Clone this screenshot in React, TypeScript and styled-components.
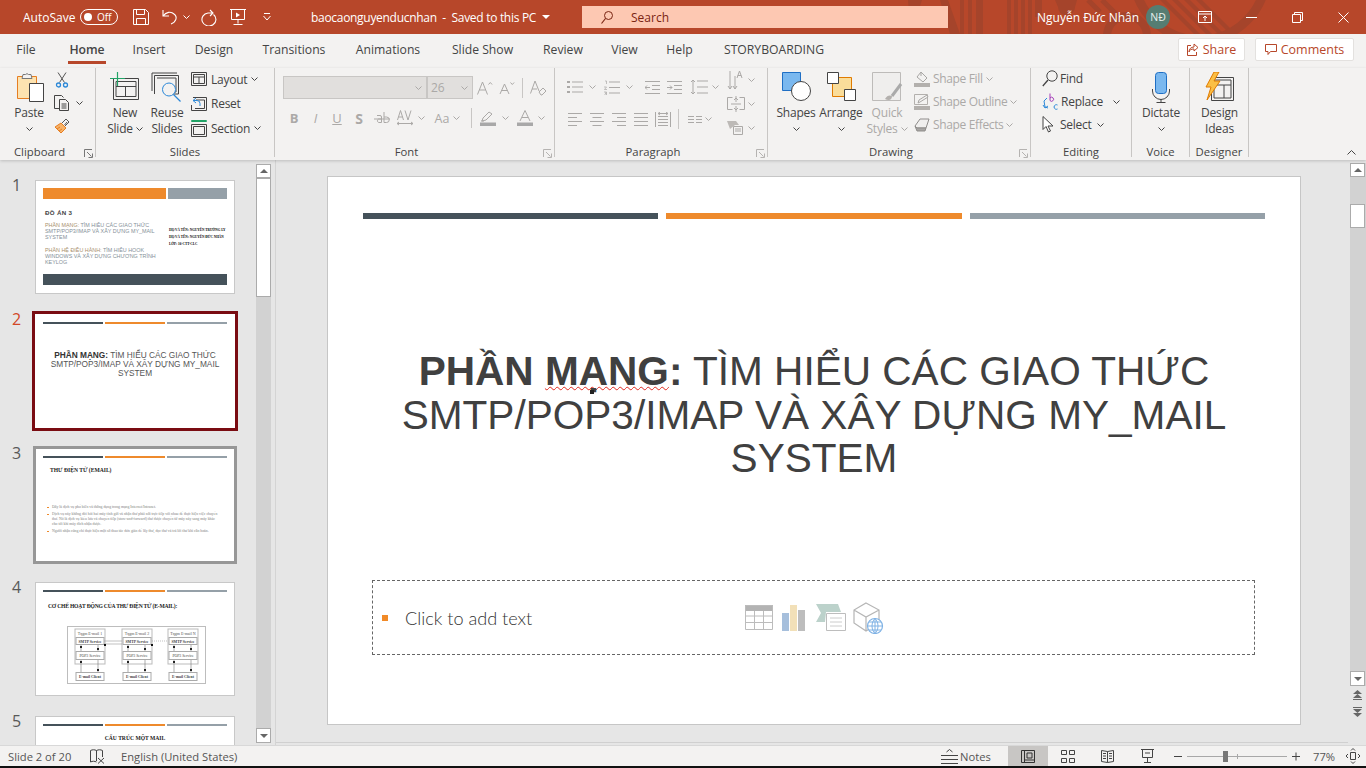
import React from "react";
import styled, { createGlobalStyle } from "styled-components";

const Global = createGlobalStyle`
  html, body { margin: 0; padding: 0; background: #000; }
  * { box-sizing: border-box; }
`;
const UI = `"Open Sans", "Noto Sans", sans-serif`;
const D = "#444";
const G = "#ABA9A7";

const Root = styled.div`
  width: 1366px; height: 768px; overflow: hidden; display: flex; flex-direction: column;
  font-family: ${UI}; font-size: 12px; color: ${D}; background: #e6e6e6;
`;
const Ico = styled.svg<{ $ml?: number }>`
  display: block; flex-shrink: 0; fill: none; margin-left: ${p => p.$ml ?? 0}px;
`;
const Chev = ({ c = D, ml = 0 }: { c?: string; ml?: number }) => (
  <Ico $ml={ml} width="7" height="4" viewBox="0 0 7 4"><path d="M.5.5l3 3 3-3" stroke={c} /></Ico>
);

/* ---------- title bar ---------- */
const TitleBar = styled.header`
  position: relative; height: 34px; background: #b7472a; color: #fff; display: flex; align-items: center;
  padding-left: 23px; flex-shrink: 0;
`;
const Pattern = styled.svg`
  position: absolute; left: 880px; top: 0; pointer-events: none;
`;
const AutoSave = styled.span` width: 57px; position: relative; `;
const Toggle = styled.span`
  position: relative; width: 38px; height: 16px; border: 1px solid #fff; border-radius: 8px; display: flex; align-items: center;
  padding-left: 3px; gap: 5px; font-size: 10px;
  &::before { content: ""; width: 8px; height: 8px; background: #fff; border-radius: 50%; }
`;
const Qat = styled.div<{ $ml: number }>` margin-left: ${p => p.$ml}px; position: relative; display: flex; align-items: center; `;
const DocTitle = styled.div`
  position: relative; margin-left: 40px; width: 271px; display: flex; align-items: center; white-space: pre; letter-spacing: -.3px;
`;
const SearchBox = styled.div`
  position: relative; width: 366px; height: 22px; background: #fdc8b2; color: #7a2412; display: flex; align-items: center;
  padding-left: 19px; gap: 18px;
`;
const UserName = styled.span` position: relative; margin-left: 89px; width: 98px; white-space: nowrap; `;
const Avatar = styled.span`
  position: relative; margin-left: 11px; width: 24px; height: 24px; border-radius: 50%; background: #567d72; color: #e8efed; font-size: 10.5px;
  display: flex; align-items: center; justify-content: center;
`;
const WinControls = styled.div` position: relative; margin-left: auto; display: flex; `;
const WinBtn = styled.span` width: 46px; height: 34px; display: flex; align-items: center; justify-content: center; `;

/* ---------- tabs ---------- */
const TabBar = styled.nav`
  height: 34px; background: #f3f2f1; display: flex; align-items: flex-start; flex-shrink: 0; padding-left: 17px;
`;
const Tab = styled.span<{ $w: number; $ml: number; $active?: boolean }>`
  position: relative; width: ${p => p.$w}px; margin-left: ${p => p.$ml}px; height: 30px; padding-top: 7px; display: flex; justify-content: center;
  white-space: nowrap; font-size: 12.2px; line-height: 18px; flex-shrink: 0;
  font-weight: ${p => (p.$active ? 600 : 400)};
  ${p => p.$active && `&::after { content: ""; position: absolute; left: 0; right: 0; top: 27px; height: 3px; background: #b7472a; }`}
`;
const ActionBtn = styled.span<{ $w: number; $ml: number }>`
  margin: 4px 0 0 ${p => p.$ml}px; width: ${p => p.$w}px; height: 23px; background: #fff; border: 1px solid #e3e1df; border-radius: 2px; color: #b7472a;
  display: flex; align-items: center; justify-content: center; gap: 4px; font-size: 12.5px; font-weight: 500; flex-shrink: 0;
`;

/* ---------- ribbon ---------- */
const Ribbon = styled.section`
  height: 92px; background: #f3f2f1; display: flex; flex-shrink: 0; position: relative; z-index: 1;
  box-shadow: 0 1px 3px rgba(0,0,0,.18);
`;
const Group = styled.div<{ $w: number }>`
  position: relative; width: ${p => p.$w}px; height: 89px; border-right: 1px solid #c8c6c4; display: flex; flex-direction: column;
`;
const GroupBody = styled.div<{ $pl?: number; $pt?: number }>`
  height: 77px; display: flex; padding-left: ${p => p.$pl ?? 0}px; padding-top: ${p => p.$pt ?? 0}px;
`;
const GroupLabel = styled.div<{ $pr?: number }>`
  height: 12px; line-height: 14px; text-align: center; font-size: 11.3px; white-space: nowrap; padding-right: ${p => p.$pr ?? 0}px;
`;
const LeftLabel = styled(GroupLabel)` text-align: left; padding-left: 14px; `;
const Launcher = styled(Ico)` position: absolute; right: 2px; bottom: -1px; `;
const BigBtn = styled.div<{ $w: number; $off?: boolean }>`
  width: ${p => p.$w}px; display: flex; flex-direction: column; align-items: center; flex-shrink: 0;
  color: ${p => (p.$off ? G : D)}; line-height: 16px; white-space: nowrap; letter-spacing: -.2px;
`;
const BigSlot = styled.div<{ $pl?: number }>` height: 37px; padding-top: 4px; padding-left: ${p => p.$pl ?? 0}px; `;
const LabelLine = styled.div` display: flex; align-items: center; gap: 3px; height: 16px; `;
const CenterChev = styled.div` height: 16px; display: flex; align-items: center; `;
const SmallCol = styled.div<{ $ml?: number; $mt?: number; $pt?: number; $gap?: number; $w?: number }>`
  margin-left: ${p => p.$ml ?? 0}px; margin-top: ${p => p.$mt ?? 0}px; padding-top: ${p => p.$pt ?? 0}px; display: flex; flex-direction: column; gap: ${p => p.$gap ?? 0}px;
  ${p => p.$w && `width: ${p.$w}px; flex-shrink: 0;`}
`;
const SmallRow = styled.div<{ $h?: number; $off?: boolean; $gap?: number }>`
  height: ${p => p.$h ?? 24}px; display: flex; align-items: center; gap: ${p => p.$gap ?? 3}px; white-space: nowrap; color: ${p => (p.$off ? G : D)};
  letter-spacing: ${p => (p.$off ? "-.35px" : "-.25px")};
`;
const IconRow = styled.div<{ $h?: number }>` display: flex; align-items: center; height: ${p => p.$h ?? 24}px; `;
const Slot = styled.span<{ $w: number; $ml?: number; $c?: string; $b?: boolean; $i?: boolean; $u?: boolean; $fs?: number }>`
  width: ${p => p.$w}px; margin-left: ${p => p.$ml ?? 0}px; display: flex; justify-content: center; align-items: center; flex-shrink: 0;
  color: ${p => p.$c ?? G}; font-size: ${p => p.$fs ?? 13}px; font-weight: ${p => (p.$b ? 700 : 400)};
  font-style: ${p => (p.$i ? "italic" : "normal")}; text-decoration: ${p => (p.$u ? "underline" : "none")};
`;
const Combo = styled.span<{ $w: number }>`
  width: ${p => p.$w}px; height: 23px; background: #e1dfdd; border: 1px solid #c8c6c4; display: flex; align-items: center; justify-content: space-between;
  padding: 0 4px 0 3px; color: ${G}; flex-shrink: 0;
`;
const VSep = styled.span<{ $ml: number; $mr: number; $h: number }>`
  width: 1px; height: ${p => p.$h}px; background: #c8c6c4; margin: 0 ${p => p.$mr}px 0 ${p => p.$ml}px; flex-shrink: 0;
`;
const Collapse = styled.div`
  position: absolute; right: 10px; bottom: 5px;
`;

/* ---------- main ---------- */
const Main = styled.main` flex: 1; display: flex; min-height: 0; `;
const ThumbPane = styled.aside` width: 276px; display: flex; border-right: 1px solid #d4d4d4; flex-shrink: 0; `;
const ThumbList = styled.div` width: 256px; height: 100%; overflow: hidden; padding-top: 20px; `;
const ThumbItem = styled.div` display: flex; height: 134px; `;
const Num = styled.div<{ $on?: boolean }>`
  width: 35px; padding-left: 12px; font-size: 16px; line-height: 16px; margin-top: -3px; color: ${p => (p.$on ? "#d24726" : "#595959")};
`;
const Thumb = styled.div<{ $mode?: "sel" | "hl" }>`
  position: relative; width: 200px; height: 114px; background: #fff; border: 1px solid #c8c8c8; padding: 7px; flex-shrink: 0;
  ${p => p.$mode === "sel" && `outline: 3px solid #7a0c12; border-color: #fff;`}
  ${p => p.$mode === "hl" && `outline: 3px solid #979797; outline-offset: -1px; border-color: #979797;`}
`;
const TBars = styled.div` display: flex; gap: 2px; `;
const TBar = styled.div<{ $c: string; $w: number; $h: number }>` width: ${p => p.$w}px; height: ${p => p.$h}px; background: ${p => p.$c}; `;
const T1Body = styled.div` display: flex; height: 75px; padding: 10px 0 0 2px; `;
const T1Left = styled.div` width: 124px; flex-shrink: 0; color: #858f98; font: 5.4px/6.2px "Liberation Sans", sans-serif; padding-right: 8px; `;
const T1Head = styled.div` color: #444; font: bold 6.2px/7px "Liberation Sans", sans-serif; margin-bottom: 6px; letter-spacing: .3px; `;
const T1Para = styled.p` margin: 0 0 6px; `;
const T1Or = styled.span` color: #a98f6d; `;
const T1Right = styled.div` margin: 18px 0 0 0; color: #000; font: bold 3.4px/7px "Liberation Serif", serif; white-space: nowrap; `;
const T2Title = styled.div`
  margin-top: 27px; text-align: center; color: #555; font: 8.3px/9.1px "Liberation Sans", sans-serif;
  b { color: #333; }
`;
const SerifTitle = styled.div<{ $ml?: number; $mt: number; $center?: boolean; $ls?: number }>`
  margin: ${p => p.$mt}px 0 0 ${p => p.$ml ?? 0}px; text-align: ${p => (p.$center ? "center" : "left")};
  font: bold 5.6px/7px "Liberation Serif", serif; color: #222; white-space: nowrap; letter-spacing: ${p => p.$ls ?? 0}px;
`;
const T3List = styled.ul`
  margin: 31px 0 0; padding: 0 0 0 4px; list-style: none; font: 3.8px/5px "Liberation Serif", serif; color: #7d7d7d; width: 178px;
  li { position: relative; padding-left: 5px; margin-bottom: 2px; }
  li::before { content: ""; position: absolute; left: 0; top: 1.500px; width: 1.500px; height: 1.500px; background: #ee8a2c; }
`;
const DiagramWrap = styled.div` margin: 16px 0 0 24px; `;

const ScrollV = styled.div` width: 15px; margin: 4px 0 2px; background: #d2d2d2; display: flex; flex-direction: column; position: relative; flex-shrink: 0; `;
const ScrollBtn = styled.div<{ $h?: number }>`
  width: 15px; height: ${p => p.$h ?? 14}px; background: #fff; border: 1px solid #ababab; display: flex; align-items: center; justify-content: center; flex-shrink: 0;
`;
const ScrollThumb = styled.div<{ $h: number; $mt: number }>`
  width: 15px; height: ${p => p.$h}px; margin-top: ${p => p.$mt}px; background: #fff; border: 1px solid #ababab; flex-shrink: 0;
`;
const Arrow = styled.span<{ $up?: boolean }>`
  width: 0; height: 0; border-left: 4px solid transparent; border-right: 4px solid transparent;
  ${p => (p.$up ? "border-bottom: 4px solid #666;" : "border-top: 4px solid #666;")}
`;
const Spacer = styled.div` flex: 1; `;

const Editor = styled.div` flex: 1; padding: 16px 0 0 51px; border-bottom: 1px solid #d0d0d0; margin-bottom: 2px; `;
const Slide = styled.article`
  width: 974px; height: 549px; background: #fff; border: 1px solid #c6c6c6; padding: 36px 35px; display: flex; flex-direction: column;
`;
const SlideBars = styled.div` display: flex; gap: 8px; `;
const SlideBar = styled.div<{ $c: string }>` flex: 1; height: 6px; background: ${p => p.$c}; `;
const Heading = styled.h1`
  margin: 131px -10px 0; text-align: center; color: #404040; font: 400 40.6px/43.6px "Liberation Sans", Arial, sans-serif; height: 131px;
`;
const Wavy = styled.span`
  position: relative;
  text-decoration: underline wavy #e0281e; text-decoration-thickness: 1px; text-underline-offset: 1px; text-decoration-skip-ink: none;
`;
const Handle = styled.span` position: absolute; left: 45px; bottom: 0; width: 4px; height: 4px; background: #222; `;
const Placeholder = styled.div`
  margin: 99px 0 0 9px; width: 883px; height: 75px; border: 1px dashed #666; display: flex; align-items: center; padding-left: 9px; flex-shrink: 0;
`;
const PBullet = styled.span` width: 6px; height: 6px; background: #f18a28; flex-shrink: 0; `;
const PText = styled.span` margin-left: 17px; width: 340px; font: 300 18.1px "Lato", sans-serif; color: #333; `;
const InsertIcons = styled.div` display: flex; align-items: center; gap: 9px; `;

const RightBar = styled.div` width: 18px; padding-left: 2px; display: flex; flex-direction: column; flex-shrink: 0; `;
const RightTrack = styled.div` height: 523px; margin-top: 3px; background: #d2d2d2; display: flex; flex-direction: column; `;
const JumpBtns = styled.div` display: flex; flex-direction: column; align-items: center; width: 15px; gap: 7px; padding-top: 4px; `;

/* ---------- status ---------- */
const Status = styled.footer`
  height: 21px; background: #f3f2f1; border-top: 1px solid #d8d8d8; display: flex; align-items: center; flex-shrink: 0; font-size: 11.2px; color: #555; padding-left: 8px;
`;
const BlackEdge = styled.div` height: 2px; background: #111; flex-shrink: 0; `;
const StatusText = styled.span<{ $ml?: number; $w?: number }>` margin-left: ${p => p.$ml ?? 0}px; width: ${p => (p.$w ? `${p.$w}px` : "auto")}; white-space: nowrap; `;
const ViewBtn = styled.span<{ $on?: boolean; $w: number }>`
  width: ${p => p.$w}px; height: 21px; background: ${p => (p.$on ? "#c8c6c4" : "transparent")}; display: flex; align-items: center; justify-content: center;
`;
const ZoomTrack = styled.span`
  position: relative; width: 100px; height: 1px; background: #a8a8a8; margin: 0 5px;
`;
const ZoomThumb = styled.span` position: absolute; left: 36px; top: -5px; width: 5px; height: 11px; background: #777; `;
const ZoomTick = styled.span` position: absolute; left: 50px; top: -2px; width: 1px; height: 5px; background: #a8a8a8; `;

/* ---------- icons ---------- */
const PasteIcon = () => (
  <Ico width="28" height="31" viewBox="0 0 28 31">
    <path d="M.5 4.500h19v22H.5z" fill="#fde3b0" stroke="#e67e22" />
    <path d="M6 2.500h2.500a2 2 0 0 1 3 0H14l1 4H5z" fill="#f3f2f1" stroke="#777" />
    <path d="M12.500 11.500h14v18h-14z" fill="#fff" stroke="#444" />
  </Ico>
);
const CutIcon = () => (
  <Ico width="14" height="16" viewBox="0 0 14 16">
    <path d="M3 .5l6.5 10M11 .5L4.5 10.500" stroke="#555" />
    <circle cx="3.500" cy="13" r="2" stroke="#2b88d8" strokeWidth="1.3" /><circle cx="10.500" cy="13" r="2" stroke="#2b88d8" strokeWidth="1.3" />
  </Ico>
);
const CopyIcon = () => (
  <Ico width="16" height="16" viewBox="0 0 16 16">
    <path d="M5.500 13.500h-5v-13h7l2 2M5.500 4.500h6l3 3v8h-9zM7.500 9h5M7.500 11h5M7.500 13h5" stroke="#444" />
  </Ico>
);
const PainterIcon = () => (
  <Ico width="17" height="16" viewBox="0 0 17 16">
    <path d="M1 9l6 6 5-5-5-5z" fill="#f7b267" stroke="#e67e22" />
    <path d="M8 5l3-3 1-1 3 3-1 1-3 3M10.500 7l2.500-3" stroke="#555" />
    <path d="M3 11l3-2M5 13l3-2" stroke="#e67e22" />
  </Ico>
);
const NewSlideIcon = () => (
  <Ico width="30" height="30" viewBox="0 0 30 30">
    <path d="M3.500 6.500h25v21h-25zM6 9.500h20v15H6zM6 14.500h20M15.500 14.500v10" stroke="#444" />
    <path d="M0 6.500h15M7.500 0v14" stroke="#21a366" strokeWidth="1.2" />
  </Ico>
);
const ReuseIcon = () => (
  <Ico width="32" height="30" viewBox="0 0 32 30">
    <path d="M1 19V1h25M3.500 22V3.500h24V22H18M6 6h19v14H18" stroke="#444" />
    <circle cx="18" cy="17.500" r="6.500" stroke="#2b88d8" fill="#f3f2f1" /><path d="M22.500 22.500l7 7" stroke="#2b88d8" strokeWidth="1.2" />
  </Ico>
);
const LayoutIcon = () => (
  <Ico width="16" height="14" viewBox="0 0 16 14"><path d="M.5.5h15v13H.5zM2.500 2.500h11v9h-11zM2.500 5h11M8 5v6.500" stroke="#444" /></Ico>
);
const ResetIcon = () => (
  <Ico width="16" height="14" viewBox="0 0 16 14">
    <path d="M2 .5h13.500v13H.5V8M3 3h10.500v8.500H4" stroke="#444" /><path d="M5 1L2 3.500 5 6M2 3.500h4a3 3 0 0 1 3 3V9" stroke="#2b88d8" fill="#f3f2f1" />
  </Ico>
);
const SectionIcon = () => (
  <Ico width="16" height="17" viewBox="0 0 16 17">
    <path d="M.5 .5h15v1H.5z" stroke="#21a366" /><path d="M.5 4.500h15v12H.5zM2.500 6.500h11v8h-11z" stroke="#444" />
  </Ico>
);
const GrowA = ({ small }: { small?: boolean }) => (
  <Ico width="16" height="14" viewBox="0 0 16 14">
    {small ? <path d="M1 13L5.500 3 10 13M2.600 9.500h5.800M11.500 1.500l1.800 2 1.800-2" stroke={G} /> : <path d="M.5 13.500L5.500 1l5 12.500M2.300 9h6.400M11.500 3.500l1.800-2 1.800 2" stroke={G} />}
  </Ico>
);
const ClearIcon = () => (
  <Ico width="17" height="16" viewBox="0 0 17 16">
    <path d="M.5 13.500L5 1l4 10M2 9h5" stroke={G} /><path d="M9 12l4-4 3 3-4 4h-1z" stroke={G} />
  </Ico>
);
const StrikeIcon = () => (
  <Ico width="16" height="12" viewBox="0 0 16 12">
    <path d="M0 7h16M3 3.500h3a1.500 1.500 0 0 1 1.500 1.500v5.500H4.500a2 2 0 0 1 0-3.500h3M10 0v10.500M10 5h2.500a2.500 2.500 0 0 1 0 5.500H10" stroke={G} />
  </Ico>
);
const AVIcon = () => (
  <Ico width="16" height="16" viewBox="0 0 16 16">
    <path d="M.5 10L3.500.5 6.500 10M1.500 7h4M8 .5l3 9.500 3-9.500M0 13.500h16M2 12l-2 1.500 2 1.500M14 12l2 1.500-2 1.500" stroke={G} />
  </Ico>
);
const HighlightIcon = () => (
  <Ico width="16" height="16" viewBox="0 0 16 16">
    <path d="M2 11l1-3 6-6 3 2-6 6z M1 11h3" stroke={G} /><path d="M0 12.500h16V16H0z" fill="#a8a8a8" />
  </Ico>
);
const FontColorIcon = () => (
  <Ico width="16" height="16" viewBox="0 0 16 16">
    <path d="M3 11L8 .5 13 11M5 7.500h6" stroke={G} /><path d="M0 12.500h16V16H0z" fill="#a8a8a8" />
  </Ico>
);
const Lines = ({ w = 15, n = 4, mode = "l" }: { w?: number; n?: number; mode?: "l" | "c" | "r" | "j" }) => (
  <Ico width={w} height="13" viewBox={`0 0 ${w} 13`}>
    {Array.from({ length: n }).map((_, i) => {
      const y = 0.5 + (i * 12) / (n - 1);
      const short = mode !== "j" && i % 2 === 1;
      const len = short ? w - 5 : w;
      const x = mode === "l" || mode === "j" ? 0 : mode === "c" ? (w - len) / 2 : w - len;
      return <path key={i} d={`M${x} ${y}h${len}`} stroke={G} />;
    })}
  </Ico>
);
const BulletsIcon = () => (
  <Ico width="16" height="14" viewBox="0 0 16 14">
    <path d="M0 1h3v2H0zM0 6h3v2H0zM0 11h3v2H0z" fill={G} /><path d="M5 2h11M5 7h11M5 12h11" stroke={G} />
  </Ico>
);
const NumbersIcon = () => (
  <Ico width="16" height="15" viewBox="0 0 16 15">
    <path d="M1 1h1.500v3M0 7h2.500L.5 9.500h2.500M0 12h2.500v1.200H1h1.500V15H0" stroke={G} strokeWidth=".7" /><path d="M5 2h11M5 7.500h11M5 13h11" stroke={G} />
  </Ico>
);
const IndentIcon = ({ flip }: { flip?: boolean }) => (
  <Ico width="15" height="13" viewBox="0 0 15 13">
    <path d="M0 .5h15M7 4.500h8M7 8.500h8M0 12.500h15" stroke={G} />
    <path d={flip ? "M0 6.500h5M3 4.500l2 2-2 2" : "M0 6.500h5M2 4.500l-2 2 2 2"} stroke={G} />
  </Ico>
);
const SpacingIcon = () => (
  <Ico width="18" height="16" viewBox="0 0 18 16">
    <path d="M3 1v14M1 3l2-2 2 2M1 13l2 2 2-2M7 2h11M7 8h11M7 14h11" stroke={G} />
  </Ico>
);
const TextDirIcon = () => (
  <Ico width="16" height="20" viewBox="0 0 16 20">
    <path d="M3 1v18M1 16l2 3 2-3M8 6v13M6 16l2 3 2-3M10 8l2.500-7L15 8M10.800 5.500h3.400" stroke={G} />
  </Ico>
);
const AlignTextIcon = () => (
  <Ico width="18" height="16" viewBox="0 0 18 16">
    <path d="M.5 1.500h5M12.500 1.500h5v12h-5M5.500 13.500h-5v-12M9 0v6M7 4l2-2 2 2M9 10v6M7 12l2 2 2-2M4 8h10" stroke={G} />
  </Ico>
);
const SmartIcon = () => (
  <Ico width="16" height="14" viewBox="0 0 16 14">
    <path d="M0 0h9l3 4H8L3 8z" fill="#bdbab7" /><path d="M6.500 5.500h9v8h-9zM8 8h6M8 10h6" stroke={G} fill="#f3f2f1" />
  </Ico>
);
const DistIcon = () => (
  <Ico width="16" height="15" viewBox="0 0 16 15">
    <path d="M.5 0v15M15.500 0v15M3 4.500h10M3 7.500h10M3 10.500h10M3 13.500h10M3 1.500h10M5 0L3 1.500 5 3M11 0l2 1.500L11 3" stroke={G} />
  </Ico>
);
const ColsIcon = () => (
  <Ico width="14" height="7" viewBox="0 0 14 7"><path d="M0 .5h6M8 .5h6M0 3.500h6M8 3.500h6M0 6.500h6M8 6.500h6" stroke={G} /></Ico>
);
const ShapesIcon = () => (
  <Ico width="29" height="29" viewBox="0 0 29 29">
    <path d="M.5.5h18v18H.5z" fill="#7ab8ef" stroke="#1f6fc4" />
    <circle cx="19" cy="19" r="9.500" fill="#fff" stroke="#444" />
  </Ico>
);
const ArrangeIcon = () => (
  <Ico width="29" height="29" viewBox="0 0 29 29">
    <path d="M5.500 5.500h19v19h-19z" fill="#fadd9a" stroke="#e07b00" />
    <path d="M.5.5h11v11H.5zM17.500 17.500h11v11h-11z" fill="#fff" stroke="#444" />
  </Ico>
);
const QuickIcon = () => (
  <Ico width="31" height="33" viewBox="0 0 31 33">
    <path d="M.5.5h28v28H.5z" fill="#efeeed" stroke="#bdbbb9" />
    <path d="M29 12L20 24" stroke="#aaa" strokeWidth="3" /><path d="M13 27c2-4 5-4 7-3 0 4-3 5-7 3z" fill="#b3b0ad" />
  </Ico>
);
const FillIcon = () => (
  <Ico width="16" height="16" viewBox="0 0 16 16">
    <path d="M7 1l6 6-4 4-6-5zM7 1V5" stroke="#a8a6a4" /><path d="M0 12h16v4H0z" fill="#b3b0ad" />
  </Ico>
);
const OutlineIcon = () => (
  <Ico width="16" height="16" viewBox="0 0 16 16">
    <path d="M.5.5h13v10H.5z" stroke="#b3b0ad" /><path d="M4 9l1-3 8-5 1 2-8 5z" fill="#f3f2f1" stroke="#a8a6a4" /><path d="M0 12h16v4H0z" fill="#b3b0ad" />
  </Ico>
);
const EffectsIcon = () => (
  <Ico width="16" height="14" viewBox="0 0 16 14">
    <path d="M1 8l5-7h9l-3 9H3z" fill="#f0efee" stroke="#8f8d8b" /><path d="M1 8l2 5h8l1-3H3z" fill="#a8a6a4" stroke="#8f8d8b" />
  </Ico>
);
const FindIcon = () => (
  <Ico width="16" height="17" viewBox="0 0 16 17">
    <circle cx="10" cy="6" r="5.200" stroke="#444" /><path d="M6 10L.8 16" stroke="#444" strokeWidth="1.3" />
  </Ico>
);
const ReplaceIcon = () => (
  <Ico width="17" height="18" viewBox="0 0 17 18">
    <path d="M8 .5v7M8 5a2 2 0 1 1 0 2.500" stroke="#a33bb8" />
    <path d="M5 5L2 8l1 6 3 1M1 12l2 3 3-2" stroke="#2b88d8" />
    <path d="M15.500 12a2.300 2.300 0 1 0 0 4" stroke="#2b88d8" />
  </Ico>
);
const SelectIcon = () => (
  <Ico width="13" height="17" viewBox="0 0 13 17">
    <path d="M1 .5v13l3-3 2.500 5.500 2-1-2.500-5h5z" stroke="#444" fill="#fff" />
  </Ico>
);
const MicIcon = () => (
  <Ico width="20" height="31" viewBox="0 0 20 31">
    <rect x="4.500" y=".5" width="11" height="21" rx="3" fill="#7ab8ef" stroke="#1f6fc4" />
    <path d="M1.500 17v2a8 8 0 0 0 17 0v-2M10 27v3M5.500 30.500h9" stroke="#444" />
  </Ico>
);
const IdeasIcon = () => (
  <Ico width="30" height="30" viewBox="0 0 30 30">
    <path d="M6.500 5.500h22v23h-22zM9 8h17v18H9zM9 13h17M19 13v13" stroke="#444" />
    <path d="M9 0L1 15h5L2 28 15 9H9l5-9z" fill="#fbbf45" stroke="#e07b00" />
  </Ico>
);
const LaunchIcon = ({ c = "#777" }: { c?: string }) => (
  <Launcher width="9" height="9" viewBox="0 0 9 9"><path d="M.5 8V.5H8M3 3l4.500 4.500M4.500 8.500h4v-4" stroke={c} /></Launcher>
);

const DiagramCol = ({ x, head }: { x: number; head: string }) => (
  <g>
    <rect x={x} y="3" width="30" height="35" stroke="#bbb" />
    <text x={x + 15} y="9" textAnchor="middle" fontFamily="Liberation Serif" fontSize="4" fill="#555">{head}</text>
    <rect x={x + 1} y="11.500" width="28" height="7" stroke="#aaa" />
    <text x={x + 15} y="16.500" textAnchor="middle" fontFamily="Liberation Serif" fontWeight="700" fontSize="3.800" fill="#444">SMTP Service</text>
    <rect x={x + 1} y="25.500" width="28" height="8" stroke="#aaa" />
    <text x={x + 15} y="31" textAnchor="middle" fontFamily="Liberation Serif" fontSize="3.800" fill="#444">POP3 Service</text>
    <rect x={x + 1} y="46.500" width="28" height="8" stroke="#aaa" />
    <text x={x + 15} y="52" textAnchor="middle" fontFamily="Liberation Serif" fontWeight="700" fontSize="3.800" fill="#444">E-mail Client</text>
    <path d={`M${x + 6} 19v6M${x + 23} 19v6M${x + 6} 34v12M${x + 23} 34v12`} stroke="#777" strokeWidth=".6" />
    <path d={`M${x + 5} 20h2v2h-2zM${x + 22} 22h2v2h-2zM${x + 5} 35h2v2h-2zM${x + 22} 43h2v2h-2z`} fill="#222" />
  </g>
);
const Diagram = () => (
  <Ico width="139" height="59" viewBox="0 0 139 59">
    <rect x=".5" y=".5" width="138" height="57" stroke="#bdbdbd" fill="#fff" />
    <DiagramCol x={8} head="Tqgm E-mail 1" />
    <DiagramCol x={55} head="Tqgm E-mail 2" />
    <DiagramCol x={101} head="Tqgm E-mail N" />
    <path d="M37 15h18M37 18h18" stroke="#999" strokeWidth=".6" />
    <path d="M85 15h16" stroke="#999" strokeWidth=".6" strokeDasharray="1 1" />
    <path d="M37 18h2v2h-2zM84 18h2v2h-2z" fill="#111" />
  </Ico>
);

const PatternArt = () => (
  <Pattern width="486" height="34" viewBox="0 0 486 34">
    <g fill="#a5442b">
      <path d="M28 0h14l-8 24h-4zM60 0h8l12 34H70zM80 0h4v34h-4zM88 0h4v34h-4zM96 0h7v34h-7zM127 0h4v34h-4zM134 0h4v34h-4zM141 0h4v34h-4zM148 0h4v34h-4zM155 0h7v17h-7z" />
      <path d="M175 0h22l-2 7a8 8 0 0 1-17 0z" />
      <path d="M280 0h6l34 34h-6zM292 0h6l34 34h-6zM304 0h6l34 34h-6zM316 0h6l30 30v4h-2z" />
    </g>
    <g fill="none" stroke="#a5442b">
      <circle cx="247" cy="36" r="20" strokeWidth="8" />
      <circle cx="320" cy="-26" r="66" strokeWidth="9" />
      <path d="M222 0l14 14M208 0l12 12" strokeWidth="5" />
    </g>
  </Pattern>
);

const tabs: [string, number, number, boolean?][] = [
  ["File", 18, 0], ["Home", 38, 33, true], ["Insert", 32, 27], ["Design", 40, 29], ["Transitions", 62, 29], ["Animations", 64, 31],
  ["Slide Show", 63, 31], ["Review", 40, 29], ["View", 27, 28], ["Help", 27, 28], ["STORYBOARDING", 102, 30],
];

const App = () => (
  <Root>
    <Global />
    <TitleBar>
      <PatternArt />
      <AutoSave>AutoSave</AutoSave>
      <Toggle>Off</Toggle>
      <Qat $ml={15}>
        <Ico width="16" height="16" viewBox="0 0 16 16"><path d="M.5.5h12l3 3v12H.5zM3.500.5v5h8v-5M3.500 15.500v-6h9v6" stroke="#fff" /></Ico>
        <Ico $ml={13} width="16" height="16" viewBox="0 0 16 16"><path d="M1 1v6h6M1 7c3-4 8-5 11-2 4 3 2 8-3 10" stroke="#fff" strokeWidth="1.1" /></Ico>
        <Ico $ml={5} width="7" height="4" viewBox="0 0 7 4"><path d="M.5.5l3 3 3-3" stroke="#fff" /></Ico>
        <Ico $ml={10} width="17" height="17" viewBox="0 0 17 17"><path d="M10 1l3 3-3 3M12 4H8a7 6.500 0 1 0 5.500 1.500" stroke="#fff" strokeWidth="1.1" /></Ico>
        <Ico $ml={13} width="16" height="16" viewBox="0 0 16 16"><path d="M0 .5h16M1.500.5v10h13V.5M8 10.500v4M3.500 15.500h9" stroke="#fff" /><path d="M6 3.500l4 2.500-4 2.500z" fill="#fff" /></Ico>
        <Ico $ml={17} width="8" height="8" viewBox="0 0 8 8"><path d="M1 .5h6M.5 3l3.500 4 3.500-4" stroke="#fff" /></Ico>
      </Qat>
      <DocTitle>
        baocaonguyenducnhan  -  Saved to this PC
        <Ico $ml={6} width="8" height="4" viewBox="0 0 8 4"><path d="M0 0h8L4 4z" fill="#fff" /></Ico>
      </DocTitle>
      <SearchBox>
        <Ico width="12" height="13" viewBox="0 0 12 13"><circle cx="7.500" cy="4.500" r="4" stroke="#7a2412" /><path d="M4.500 7.500L.5 12.500" stroke="#7a2412" strokeWidth="1.2" /></Ico>
        Search
      </SearchBox>
      <UserName>Nguyễn Đức Nhân</UserName>
      <Avatar>NĐ</Avatar>
      <WinControls>
        <WinBtn><Ico width="14" height="12" viewBox="0 0 14 12"><path d="M.5.5h13v11H.5zM.5 3h13M7 10V5M5 7l2-2 2 2" stroke="#fff" /></Ico></WinBtn>
        <WinBtn><Ico width="11" height="1" viewBox="0 0 11 1"><path d="M0 .5h11" stroke="#fff" /></Ico></WinBtn>
        <WinBtn><Ico width="11" height="11" viewBox="0 0 11 11"><path d="M.5 2.500h8v8h-8zM2.500 2.500v-2h8v8h-2" stroke="#fff" /></Ico></WinBtn>
        <WinBtn><Ico width="11" height="11" viewBox="0 0 11 11"><path d="M.5.5l10 10M10.500.5l-10 10" stroke="#fff" /></Ico></WinBtn>
      </WinControls>
    </TitleBar>

    <TabBar>
      {tabs.map(([t, w, ml, a]) => <Tab key={t} $w={w} $ml={ml} $active={a}>{t}</Tab>)}
      <ActionBtn $w={67} $ml={353}>
        <Ico width="12" height="13" viewBox="0 0 12 13"><path d="M7 1l4 3.500L7 8V6C4 6 2.500 7 2 9c0-3 2-5 5-5zM4 2.500H.5v10h9V9" stroke="#b7472a" /></Ico>
        Share
      </ActionBtn>
      <ActionBtn $w={99} $ml={10}>
        <Ico width="12" height="12" viewBox="0 0 12 12"><path d="M.5.5h11v7H5.500L3 10.500v-3H.5z" stroke="#b7472a" /></Ico>
        Comments
      </ActionBtn>
    </TabBar>

    <Ribbon>
      <Group $w={96}>
        <GroupBody $pl={6}>
          <BigBtn $w={46}>
            <BigSlot $pl={3}><PasteIcon /></BigSlot>
            <LabelLine>Paste</LabelLine>
            <CenterChev><Chev /></CenterChev>
          </BigBtn>
          <SmallCol $ml={2} $pt={4} $gap={7}>
            <IconRow $h={16}><Slot $w={14} $ml={1}><CutIcon /></Slot></IconRow>
            <IconRow $h={16}><CopyIcon /><Chev ml={6} /></IconRow>
            <IconRow $h={16}><PainterIcon /></IconRow>
          </SmallCol>
        </GroupBody>
        <LeftLabel>Clipboard</LeftLabel>
        <LaunchIcon />
      </Group>

      <Group $w={179}>
        <GroupBody $pl={5}>
          <BigBtn $w={48}>
            <BigSlot><NewSlideIcon /></BigSlot>
            <LabelLine>New</LabelLine>
            <LabelLine>Slide <Chev /></LabelLine>
          </BigBtn>
          <BigBtn $w={36}>
            <BigSlot><ReuseIcon /></BigSlot>
            <LabelLine>Reuse</LabelLine>
            <LabelLine>Slides</LabelLine>
          </BigBtn>
          <SmallCol $ml={6} $mt={-1}>
            <SmallRow $h={24.5} $gap={4}><LayoutIcon />Layout <Chev /></SmallRow>
            <SmallRow $h={24.5} $gap={4}><ResetIcon />Reset</SmallRow>
            <SmallRow $h={24.5} $gap={4}><SectionIcon />Section <Chev /></SmallRow>
          </SmallCol>
        </GroupBody>
        <GroupLabel>Slides</GroupLabel>
      </Group>

      <Group $w={280}>
        <GroupBody $pl={8} $pt={8}>
          <SmallCol $gap={7}>
            <IconRow $h={23}>
              <Combo $w={144}><span /><Chev c={G} /></Combo>
              <Combo $w={46}>26<Chev c={G} /></Combo>
              <Slot $w={16} $ml={4}><GrowA /></Slot>
              <Slot $w={16} $ml={6}><GrowA small /></Slot>
              <VSep $ml={7} $mr={7} $h={20} />
              <ClearIcon />
            </IconRow>
            <IconRow $h={24}>
              <Slot $w={22} $b>B</Slot>
              <Slot $w={21} $i>I</Slot>
              <Slot $w={22} $u>U</Slot>
              <Slot $w={22} $b $fs={14}>S</Slot>
              <Slot $w={24}><StrikeIcon /></Slot>
              <Slot $w={22}><AVIcon /></Slot>
              <Chev c={G} ml={2} />
              <Slot $w={20} $ml={7} $fs={12.500}>Aa</Slot>
              <Chev c={G} ml={1} />
              <VSep $ml={11} $mr={7} $h={20} />
              <Slot $w={18}><HighlightIcon /></Slot>
              <Chev c={G} ml={5} />
              <Slot $w={18} $ml={7}><FontColorIcon /></Slot>
              <Chev c={G} ml={4} />
            </IconRow>
          </SmallCol>
        </GroupBody>
        <GroupLabel $pr={16}>Font</GroupLabel>
        <LaunchIcon c="#b5b3b1" />
      </Group>

      <Group $w={213}>
        <GroupBody $pl={12}>
          <SmallCol $gap={8} $pt={7} $w={160}>
            <IconRow $h={24}>
              <BulletsIcon /><Chev c={G} ml={6} />
              <Slot $w={16} $ml={8}><NumbersIcon /></Slot><Chev c={G} ml={6} />
              <Slot $w={15} $ml={12}><IndentIcon /></Slot>
              <Slot $w={15} $ml={7}><IndentIcon flip /></Slot>
              <Slot $w={18} $ml={8}><SpacingIcon /></Slot><Chev c={G} ml={4} />
            </IconRow>
            <IconRow $h={24}>
              <Slot $w={14} $ml={1}><Lines w={14} mode="l" /></Slot>
              <Slot $w={14} $ml={8}><Lines w={14} mode="c" /></Slot>
              <Slot $w={14} $ml={8}><Lines w={14} mode="r" /></Slot>
              <Slot $w={14} $ml={8}><Lines w={14} mode="j" /></Slot>
              <Slot $w={16} $ml={7}><DistIcon /></Slot>
              <VSep $ml={7} $mr={9} $h={20} />
              <ColsIcon /><Chev c={G} ml={3} />
            </IconRow>
          </SmallCol>
          <SmallCol>
            <IconRow $h={24}><TextDirIcon /><Chev c={G} ml={5} /></IconRow>
            <IconRow $h={24}><AlignTextIcon /><Chev c={G} ml={3} /></IconRow>
            <IconRow $h={24}><SmartIcon /><Chev c={G} ml={5} /></IconRow>
          </SmallCol>
        </GroupBody>
        <GroupLabel $pr={16}>Paragraph</GroupLabel>
        <LaunchIcon c="#b5b3b1" />
      </Group>

      <Group $w={263}>
        <GroupBody $pl={5}>
          <BigBtn $w={46}>
            <BigSlot><ShapesIcon /></BigSlot>
            <LabelLine>Shapes</LabelLine>
            <CenterChev><Chev /></CenterChev>
          </BigBtn>
          <BigBtn $w={44}>
            <BigSlot><ArrangeIcon /></BigSlot>
            <LabelLine>Arrange</LabelLine>
            <CenterChev><Chev /></CenterChev>
          </BigBtn>
          <BigBtn $w={48} $off>
            <BigSlot><QuickIcon /></BigSlot>
            <LabelLine>Quick</LabelLine>
            <LabelLine>Styles <Chev c={G} /></LabelLine>
          </BigBtn>
          <SmallCol $ml={3} $mt={-1}>
            <SmallRow $h={23} $off><FillIcon />Shape Fill <Chev c={G} /></SmallRow>
            <SmallRow $h={23} $off><OutlineIcon />Shape Outline <Chev c={G} /></SmallRow>
            <SmallRow $h={23} $off><EffectsIcon />Shape Effects <Chev c={G} /></SmallRow>
          </SmallCol>
        </GroupBody>
        <GroupLabel $pr={16}>Drawing</GroupLabel>
        <LaunchIcon c="#b5b3b1" />
      </Group>

      <Group $w={101}>
        <GroupBody $pl={11}>
          <SmallCol $mt={-1}>
            <SmallRow $h={23} $gap={2}><FindIcon />Find</SmallRow>
            <SmallRow $h={23} $gap={2}><ReplaceIcon />Replace<Chev ml={8} /></SmallRow>
            <SmallRow $h={23} $gap={5}><SelectIcon />Select <Chev /></SmallRow>
          </SmallCol>
        </GroupBody>
        <GroupLabel>Editing</GroupLabel>
      </Group>

      <Group $w={58}>
        <GroupBody>
          <BigBtn $w={58}>
            <BigSlot><MicIcon /></BigSlot>
            <LabelLine>Dictate</LabelLine>
            <CenterChev><Chev /></CenterChev>
          </BigBtn>
        </GroupBody>
        <GroupLabel>Voice</GroupLabel>
      </Group>

      <Group $w={59}>
        <GroupBody>
          <BigBtn $w={59}>
            <BigSlot><IdeasIcon /></BigSlot>
            <LabelLine>Design</LabelLine>
            <LabelLine>Ideas</LabelLine>
          </BigBtn>
        </GroupBody>
        <GroupLabel>Designer</GroupLabel>
      </Group>

      <Collapse><Ico width="9" height="5" viewBox="0 0 9 5"><path d="M.5 4.500l4-4 4 4" stroke="#444" /></Ico></Collapse>
    </Ribbon>

    <Main>
      <ThumbPane>
        <ThumbList>
          <ThumbItem>
            <Num>1</Num>
            <Thumb>
              <TBars><TBar $c="#ee8a2c" $w={123} $h={11} /><TBar $c="#95a0a8" $w={59} $h={11} /></TBars>
              <T1Body>
                <T1Left>
                  <T1Head>ĐỒ ÁN 3</T1Head>
                  <T1Para><T1Or>PHẦN MẠNG:</T1Or> TÌM HIỂU CÁC GIAO THỨC SMTP/POP3/IMAP VÀ XÂY DỰNG MY_MAIL SYSTEM</T1Para>
                  <T1Para><T1Or>PHẦN HỆ ĐIỀU HÀNH:</T1Or> TÌM HIỂU HOOK WINDOWS VÀ XÂY DỰNG CHƯƠNG TRÌNH KEYLOG</T1Para>
                </T1Left>
                <T1Right>HỌ VÀ TÊN: NGUYỄN TRƯỜNG LY<br />HỌ VÀ TÊN: NGUYỄN ĐỨC NHÂN<br />LỚP: 16-CTT-CLC</T1Right>
              </T1Body>
              <TBar $c="#45525a" $w={184} $h={11} />
            </Thumb>
          </ThumbItem>
          <ThumbItem>
            <Num $on>2</Num>
            <Thumb $mode="sel">
              <TBars><TBar $c="#45525a" $w={60} $h={2} /><TBar $c="#ee8a2c" $w={60} $h={2} /><TBar $c="#95a0a8" $w={60} $h={2} /></TBars>
              <T2Title><b>PHẦN MẠNG:</b> TÌM HIỂU CÁC GIAO THỨC SMTP/POP3/IMAP VÀ XÂY DỰNG MY_MAIL SYSTEM</T2Title>
            </Thumb>
          </ThumbItem>
          <ThumbItem>
            <Num>3</Num>
            <Thumb $mode="hl">
              <TBars><TBar $c="#45525a" $w={60} $h={2} /><TBar $c="#ee8a2c" $w={60} $h={2} /><TBar $c="#95a0a8" $w={60} $h={2} /></TBars>
              <SerifTitle $ml={7} $mt={9}>THƯ ĐIỆN TỬ (EMAIL)</SerifTitle>
              <T3List>
                <li>Đây là dịch vụ phổ biến và thông dụng trong mạng Internet/Intranet.</li>
                <li>Dịch vụ này không đòi hỏi hai máy tính gửi và nhận thư phải nối trực tiếp với nhau để thực hiện việc chuyển thư. Nó là dịch vụ kiểu lưu và chuyển tiếp (store-and-forward) thư được chuyển từ máy này sang máy khác cho tới khi máy đích nhận được.</li>
                <li>Người nhận cũng chỉ thực hiện một số thao tác đơn giản để lấy thư, dọc thư và trả lời thư khi cần hoàn.</li>
              </T3List>
            </Thumb>
          </ThumbItem>
          <ThumbItem>
            <Num>4</Num>
            <Thumb>
              <TBars><TBar $c="#45525a" $w={60} $h={2} /><TBar $c="#ee8a2c" $w={60} $h={2} /><TBar $c="#95a0a8" $w={60} $h={2} /></TBars>
              <SerifTitle $ml={5} $mt={11} $ls={-0.2}>CƠ CHẾ HOẠT ĐỘNG CỦA THƯ ĐIỆN TỬ (E-MAIL):</SerifTitle>
              <DiagramWrap><Diagram /></DiagramWrap>
            </Thumb>
          </ThumbItem>
          <ThumbItem>
            <Num>5</Num>
            <Thumb>
              <TBars><TBar $c="#45525a" $w={60} $h={2} /><TBar $c="#ee8a2c" $w={60} $h={2} /><TBar $c="#95a0a8" $w={60} $h={2} /></TBars>
              <SerifTitle $mt={9} $center>CẤU TRÚC MỘT MAIL</SerifTitle>
            </Thumb>
          </ThumbItem>
        </ThumbList>
        <ScrollV>
          <ScrollBtn $h={14}><Arrow $up /></ScrollBtn>
          <ScrollThumb $h={119} $mt={0} />
          <Spacer />
          <ScrollBtn $h={15}><Arrow /></ScrollBtn>
        </ScrollV>
      </ThumbPane>

      <Editor>
        <Slide>
          <SlideBars><SlideBar $c="#45525a" /><SlideBar $c="#ee8a2c" /><SlideBar $c="#95a0a8" /></SlideBars>
          <Heading>
            <b>PHẦN <Wavy>MẠNG<Handle /></Wavy>:</b> TÌM HIỂU CÁC GIAO THỨC SMTP/POP3/IMAP VÀ XÂY DỰNG MY_MAIL SYSTEM
          </Heading>
          <Placeholder>
            <PBullet />
            <PText>Click to add text</PText>
            <InsertIcons>
              <Ico width="28" height="25" viewBox="0 0 28 25">
                <path d="M0 0h28v6H0z" fill="#b3b3b3" /><path d="M.5.5h27v24H.5zM.5 11h27M.5 17.500h27M9.500 6v18M18.500 6v18" stroke="#bcbcbc" />
              </Ico>
              <Ico width="24" height="26" viewBox="0 0 24 26"><path d="M0 8h7v18H0z" fill="#a6bfdc" /><path d="M8 0h7v26H8z" fill="#f2e0b8" /><path d="M16 5h7v21h-7z" fill="#bdbdbd" /></Ico>
              <Ico $ml={1} width="30" height="27" viewBox="0 0 30 27">
                <path d="M0 0h22l3 8H10l-1 10H0l5-9z" fill="#bcd2cb" /><path d="M10.500 9.500h19v17h-19z" fill="#fff" stroke="#bdbdbd" /><path d="M14 14h12M14 18h12M14 22h12" stroke="#ccc" />
              </Ico>
              <Ico $ml={-2} width="31" height="32" viewBox="0 0 31 32">
                <path d="M13 1l13 7v13l-13 8-12-8V8zM1 8l12 7 13-7M13 15v14" stroke="#b5b5b5" strokeWidth="1.2" />
                <circle cx="22" cy="24" r="7.500" fill="#fff" stroke="#7fb2e5" strokeWidth="1.2" /><path d="M14.500 24h15M22 16.500v15M16 20h12M16 28h12M22 16.500c-4 4-4 11 0 15M22 16.500c4 4 4 11 0 15" stroke="#7fb2e5" />
              </Ico>
            </InsertIcons>
          </Placeholder>
        </Slide>
      </Editor>

      <RightBar>
        <RightTrack>
          <ScrollBtn $h={14}><Arrow $up /></ScrollBtn>
          <ScrollThumb $h={24} $mt={27} />
          <Spacer />
          <ScrollBtn $h={15}><Arrow /></ScrollBtn>
        </RightTrack>
        <JumpBtns>
          <Ico width="9" height="10" viewBox="0 0 9 10"><path d="M4.500 0L9 4H0zM4.500 4L9 8H0zM0 9h9v1H0z" fill="#666" /></Ico>
          <Ico width="9" height="10" viewBox="0 0 9 10"><path d="M0 0h9v1H0zM0 2h9L4.500 6zM0 6h9l-4.500 4z" fill="#666" /></Ico>
        </JumpBtns>
      </RightBar>
    </Main>

    <Status>
      <StatusText $w={82}>Slide 2 of 20</StatusText>
      <Ico width="15" height="15" viewBox="0 0 15 15"><path d="M.5 1.500c2-1 4-1 6 0 2-1 4-1 6 0V8M.5 1.500V13c2-1 4-1 6 0M6.500 1.500V12M8 9l6 5.500M14 9l-6 5.500" stroke="#444" /></Ico>
      <StatusText $ml={16} $w={820}>English (United States)</StatusText>
      <Ico width="17" height="15" viewBox="0 0 17 15"><path d="M5.500 3l3-2.500 3 2.500M0 6.500h17M0 10.500h17M0 14.500h17" stroke="#444" /></Ico>
      <StatusText $ml={2} $w={48}>Notes</StatusText>
      <ViewBtn $on $w={40}><Ico width="14" height="13" viewBox="0 0 14 13"><path d="M.5.5h13v12H.5zM3.500.5v12M6 3h5v5H6zM3.500 10h10" stroke="#333" /></Ico></ViewBtn>
      <ViewBtn $w={40}><Ico width="14" height="13" viewBox="0 0 14 13"><path d="M.5.5h5v4h-5zM8.500.5h5v4h-5zM.5 8.500h5v4h-5zM8.500 8.500h5v4h-5z" stroke="#444" /></Ico></ViewBtn>
      <ViewBtn $w={39}><Ico width="13" height="13" viewBox="0 0 13 13"><path d="M6.500 1.500L.5.500v11l6 1 6-1V.500zM6.500 1.500v11M2 3.500h3M2 6h3M2 8.500h3M8 3.500h3M8 6h3M8 8.500h3" stroke="#444" /></Ico></ViewBtn>
      <ViewBtn $w={40}><Ico width="13" height="14" viewBox="0 0 13 14"><path d="M0 .5h13M1.500.5v8h10v-8M6.500 8.500v5M3 13.500h7M4 4h5" stroke="#444" /></Ico></ViewBtn>
      <Ico $ml={7} width="8" height="1" viewBox="0 0 8 1"><path d="M0 .5h8" stroke="#444" /></Ico>
      <ZoomTrack><ZoomThumb /><ZoomTick /></ZoomTrack>
      <Ico width="8" height="9" viewBox="0 0 8 9"><path d="M0 4.500h8M4 .5v8" stroke="#444" /></Ico>
      <StatusText $ml={13} $w={32}>77%</StatusText>
      <Ico width="16" height="16" viewBox="0 0 16 16"><path d="M5.500 4.500h5v7h-5zM6 2.500l2-2 2 2M6 13.500l2 2 2-2M3 6L1 8l2 2M13 6l2 2-2 2" stroke="#444" /></Ico>
    </Status>
    <BlackEdge />
  </Root>
);

export default App;
